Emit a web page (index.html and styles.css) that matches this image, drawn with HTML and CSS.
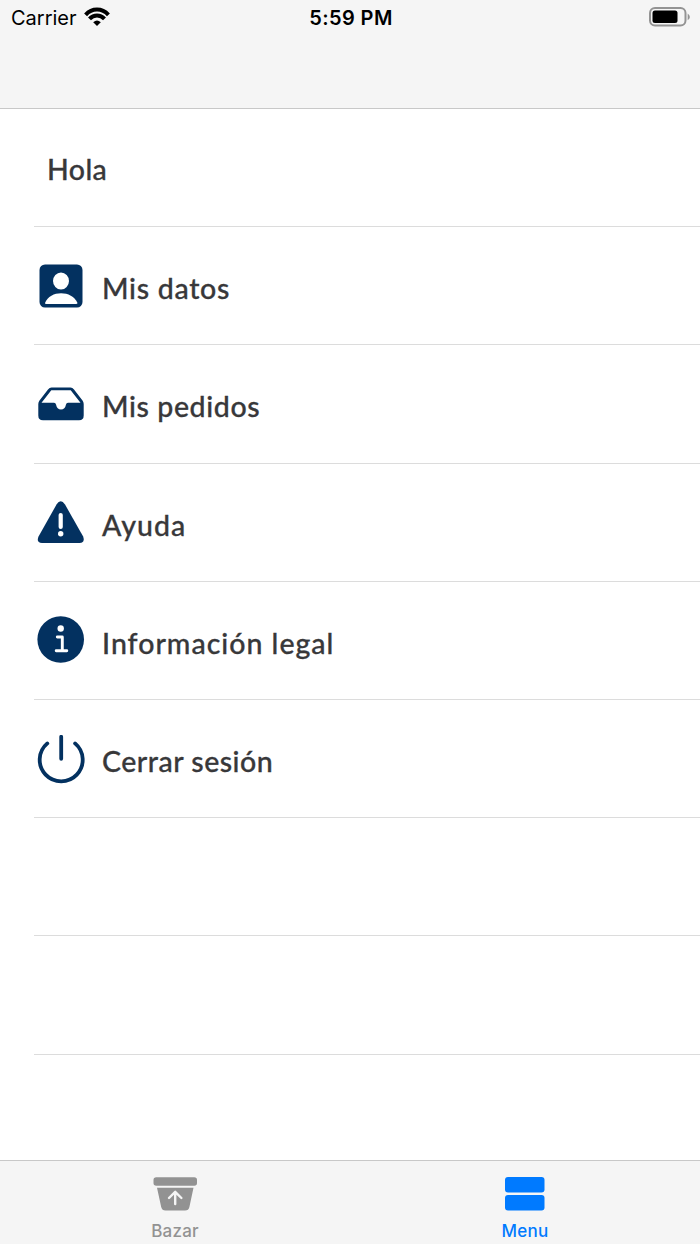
FILE: index.html
```html
<!DOCTYPE html>
<html lang="es">
<head>
<meta charset="utf-8">
<title>Menu</title>
<link rel="stylesheet" href="styles.css">
</head>
<body>
<div class="screen">
  <header class="navbar">
    <div class="status">
      <div class="carrier"><span>Carrier</span>
        <svg class="wifi" width="26" height="20" viewBox="0 0 26 20">
          <g fill="none" stroke="#000" stroke-width="4"><path d="M1.600 7.800C8 .8 18 .8 24.400 7.800"/><path d="M5.500 11.900C9.700 7.400 16.300 7.400 20.500 11.900"/></g>
          <path d="M13 19L9.200 15.200Q13 12 16.800 15.200Z"/>
        </svg>
      </div>
      <time class="clock">5:59 PM</time>
      <svg class="battery" width="42" height="20" viewBox="0 0 42 20">
        <rect x="1" y="1" width="35.500" height="17.500" rx="5" fill="none" stroke="#939393" stroke-width="2"/>
        <rect x="3.500" y="3.500" width="25" height="12.500" rx="2.500"/>
        <path d="M38.700 6.500Q43 10 38.700 13.300Z" fill="#939393"/>
      </svg>
    </div>
  </header>
  <main class="list">
    <div class="row greeting"><span class="label hola">Hola</span></div>
    <div class="row">
      <svg class="icon" width="48" height="50" viewBox="0 0 48 50"><rect x="2.500" y="2.500" width="43" height="43" rx="5.500"/><ellipse cx="24" cy="19" rx="8" ry="8.600" fill="#fff"/><path d="M8 41C13 28 35 28 40.500 41Q40.500 42 39 42H9Q8 42 8 41Z" fill="#fff"/></svg>
      <span class="label datos">Mis datos</span>
    </div>
    <div class="row">
      <svg class="icon" width="48" height="50" viewBox="0 0 48 50"><path fill-rule="evenodd" d="M14.500 7.500H33.500Q35.500 7.500 37 9.500L45.500 20.500Q46.700 22 46.700 24V35.500Q46.700 40.300 42 40.300H6Q1.300 40.300 1.300 35.500V24Q1.300 22 2.500 20.500L11 9.500Q12.500 7.500 14.500 7.500ZM14.300 10.200L4.500 22.800H17Q18.700 22.800 19 24.500Q20 29.500 24 29.500Q28 29.500 29 24.500Q29.300 22.800 31 22.800H43.500L33.700 10.200Z"/></svg>
      <span class="label pedidos">Mis pedidos</span>
    </div>
    <div class="row">
      <svg class="icon" width="48" height="50" viewBox="0 0 48 50"><path d="M19.500 6.500Q23.700 0 28 6.500L46 38.200Q48.500 44.500 42.500 45H5Q-1.200 44.500 1.700 38.200Z"/><path d="M23.700 17V29" stroke="#fff" stroke-width="4.200" stroke-linecap="round"/><circle cx="23.700" cy="35.700" r="2.700" fill="#fff"/></svg>
      <span class="label ayuda">Ayuda</span>
    </div>
    <div class="row">
      <svg class="icon" width="48" height="50" viewBox="0 0 48 50"><circle cx="23.700" cy="23.500" r="23.300"/><circle cx="23.700" cy="12.500" r="3.200" fill="#fff"/><path d="M20.300 21H25.300V34.800M19.200 34.800H29.800" fill="none" stroke="#fff" stroke-width="2.900" stroke-linecap="round" stroke-linejoin="round"/></svg>
      <span class="label legal">Información legal</span>
    </div>
    <div class="row">
      <svg class="icon" width="48" height="50" viewBox="0 0 48 50"><g fill="none" stroke="#033160" stroke-width="3.800" stroke-linecap="round"><path d="M10.300 8.400A21.500 21.500 0 1 0 38.100 8.400M24.200 1.800V23.800"/></g></svg>
      <span class="label sesion">Cerrar sesión</span>
    </div>
    <div class="row"></div>
    <div class="row"></div>
    <div class="row last"></div>
  </main>
  <nav class="tabbar">
    <div class="tab">
      <svg width="46" height="36" viewBox="0 0 46 36"><rect x="1.500" y="1.200" width="43.500" height="8.600" rx="2.800"/><path d="M5 11.800H41.500L37.400 31Q36.700 34.500 33 34.500H13.500Q10 34.500 9.200 31Z"/><path d="M23.200 28V16.500M17 22L23.200 15.800L29.400 22" fill="none" stroke="#f5f5f5" stroke-width="2.400" stroke-linecap="round" stroke-linejoin="round"/></svg>
      <span>Bazar</span>
    </div>
    <div class="tab active">
      <svg width="46" height="36" viewBox="0 0 46 36"><rect x="3" y="1" width="39.500" height="15.500" rx="3"/><rect x="3" y="19" width="39.500" height="15.500" rx="3"/></svg>
      <span class="menu">Menu</span>
    </div>
  </nav>
</div>
</body>
</html>
```
FILE: styles.css
```css
* { box-sizing: border-box; }
body { margin: 0; background: #fff; font-family: Inter, "Liberation Sans", sans-serif; }
svg { display: block; flex: none; }
.screen { width: 700px; height: 1244px; display: flex; flex-direction: column; overflow: hidden; }
.navbar { height: 109px; flex: none; background: #f5f5f5; border-bottom: 1px solid #c8c8c8; }
.status { display: grid; grid-template-columns: 1fr auto 1fr; height: 36px; padding: 0 9px 0 11px; }
.carrier { display: flex; font-size: 20px; line-height: 36px; gap: 7px; }
.wifi { margin-top: 7px; }
.clock { font-size: 20px; font-weight: 600; line-height: 36px; letter-spacing: .4px; }
.battery { justify-self: end; margin-top: 7px; }
.list { flex: 1; min-height: 0; overflow: hidden; }
.row { height: 118.200px; margin-left: 34px; padding: 2px 0 0 3px; display: flex; align-items: center; gap: 17px; border-bottom: 1px solid #dcdcdc; }
.row.last { border-bottom: 0; }
.greeting { padding: 0 0 0 13px; }
.icon { fill: #033160; }
.label { font-family: Lato, sans-serif; font-size: 28.500px; font-weight: 500; line-height: 36px; color: #38383a; -webkit-text-stroke: .3px #38383a; white-space: nowrap; padding-top: 3px; }
.hola { letter-spacing: .4px; }
.datos { letter-spacing: .7px; }
.pedidos { letter-spacing: .6px; }
.ayuda { letter-spacing: 1px; }
.legal { letter-spacing: 1px; }
.sesion { letter-spacing: .5px; }
.tabbar { height: 84px; flex: none; display: flex; background: #f5f5f5; border-top: 1px solid #c8c8c8; }
.tab { flex: 1; display: flex; flex-direction: column; align-items: center; padding-top: 15px; color: #929292; fill: #929292; font-size: 17px; font-weight: 500; line-height: 22px; letter-spacing: .2px; }
.tab span { margin-top: 8px; }
.active { color: #007aff; fill: #007aff; }
```
